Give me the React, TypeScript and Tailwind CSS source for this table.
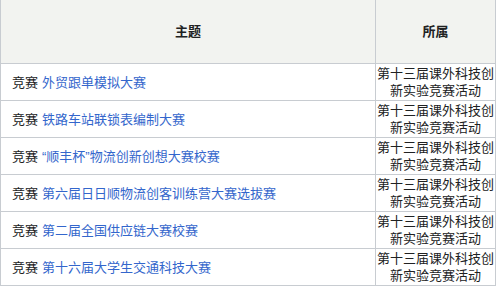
import React from "react";

const rows: { t: string }[] = [
  { t: "外贸跟单模拟大赛" },
  { t: "铁路车站联锁表编制大赛" },
  { t: "“顺丰杯”物流创新创想大赛校赛" },
  { t: "第六届日日顺物流创客训练营大赛选拔赛" },
  { t: "第二届全国供应链大赛校赛" },
  { t: "第十六届大学生交通科技大赛" },
];

export default function App() {
  return (
    <div
      className="w-[497px] h-[287px] bg-white overflow-hidden text-[13px] text-[#202122]"
      style={{ fontFamily: '"Liberation Sans", "Noto Sans CJK SC", sans-serif' }}
    >
      <div className="w-[496px] border-l border-r border-[#c8ccd1]">
        <div className="flex h-[64px] bg-[#f2f3f0] border-b border-[#c8ccd1]">
          <div className="w-[375px] border-r border-[#c8ccd1] flex items-center justify-center font-bold">
            主题
          </div>
          <div className="w-[119px] flex items-center justify-center font-bold">所属</div>
        </div>
        {rows.map((r, i) => (
          <div key={i} className="flex h-[37px] border-b border-[#c8ccd1]">
            <div className="w-[375px] border-r border-[#c8ccd1] flex items-center pl-[11px] whitespace-nowrap leading-[17px]">
              <span>竞赛</span>
              <span className="ml-[4px] text-[#3366cc]">{r.t}</span>
            </div>
            <div className="w-[119px] flex flex-col items-center justify-center leading-[17px] text-center whitespace-nowrap">
              <span>第十三届课外科技创</span>
              <span>新实验竞赛活动</span>
            </div>
          </div>
        ))}
      </div>
    </div>
  );
}
